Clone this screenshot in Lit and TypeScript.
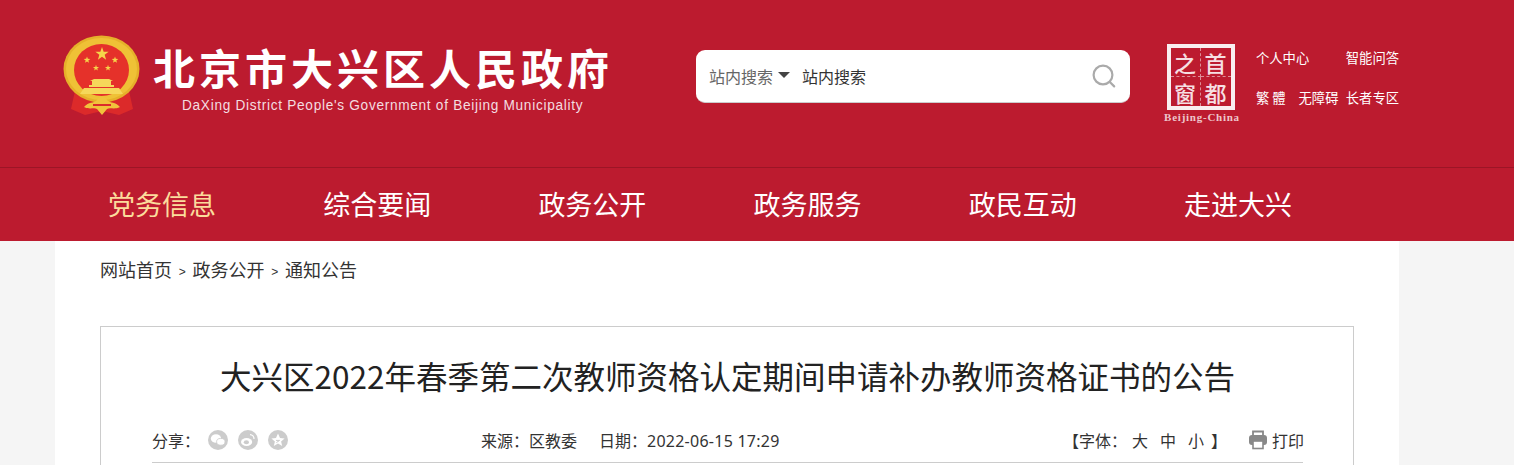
import { LitElement, html, css, svg } from "lit";
import { customElement } from "lit/decorators.js";

const star = (cx: number, cy: number, r: number) => {
  const pts: string[] = [];
  for (let i = 0; i < 10; i++) {
    const a = -Math.PI / 2 + (i * Math.PI) / 5;
    const rr = i % 2 ? r * 0.4 : r;
    pts.push(`${(cx + rr * Math.cos(a)).toFixed(2)},${(cy + rr * Math.sin(a)).toFixed(2)}`);
  }
  return svg`<polygon points=${pts.join(" ")} fill="#f5d44a"></polygon>`;
};

@customElement("app-root")
export class AppRoot extends LitElement {
  static styles = css`
    :host {
      display: block;
      height: 465px;
      overflow: hidden;
      background: #f5f5f5;
      font-family: "Noto Sans CJK SC", "Liberation Sans", sans-serif;
      color: #333;
    }
    .top {
      height: 167px;
      background: #bc1b2f;
      border-bottom: 1px solid #9c1526;
      display: flex;
      align-items: flex-start;
      box-sizing: content-box;
    }
    .emblem {
      margin: 35px 0 0 63px;
      width: 78px;
      height: 82px;
      flex: none;
    }
    .brand {
      margin: 42px 0 0 12px;
      width: 483px;
      flex: none;
      color: #fff;
    }
    .brand-cn {
      font-size: 42px;
      line-height: 50px;
      font-weight: 700;
      letter-spacing: 4px;
      white-space: nowrap;
    }
    .brand-en {
      font-family: "Liberation Sans", sans-serif;
      font-size: 15.5px;
      line-height: 18px;
      margin: 4px 0 0 29px;
      letter-spacing: 0.8px;
      color: #f4dde0;
      white-space: nowrap;
      transform: scaleX(0.88);
      transform-origin: left center;
    }
    .search {
      margin: 50px 0 0 60px;
      width: 434px;
      height: 53px;
      box-sizing: border-box;
      background: #fff;
      border-radius: 9px;
      border-bottom: 1px solid #ccc;
      display: flex;
      align-items: center;
      padding: 0 14px 0 13px;
      font-size: 16px;
      flex: none;
      white-space: nowrap;
    }
    .scope {
      color: #666;
      width: 64px;
      flex: none;
    }
    .caret {
      width: 0;
      height: 0;
      border-left: 6.5px solid transparent;
      border-right: 6.5px solid transparent;
      border-top: 6px solid #444;
      margin: 0 0 2px 5px;
      flex: none;
    }
    .query {
      margin-left: 12px;
      color: #333;
      flex: 1;
    }
    .lens {
      width: 24px;
      height: 24px;
      flex: none;
    }
    .mark {
      margin: 44px 0 0 34px;
      width: 76px;
      flex: none;
      color: #fff;
      display: flex;
      flex-direction: column;
      align-items: center;
    }
    .seal {
      width: 68px;
      height: 66px;
      box-sizing: border-box;
      border: 4px solid #f9eef0;
      display: grid;
      grid-template-columns: 1fr 1fr;
      grid-template-rows: 1fr 1fr;
      font-size: 22px;
      font-weight: 500;
      line-height: 1;
      margin-left: -3px;
    }
    .seal span {
      display: flex;
      align-items: center;
      justify-content: center;
      color: #f6dfe2;
    }
    .seal span:nth-child(odd) {
      border-right: 1px dashed #dd8e98;
    }
    .seal span:nth-child(-n + 2) {
      border-bottom: 1px dashed #dd8e98;
    }
    .mark-en {
      font-family: "Liberation Serif", serif;
      font-weight: 700;
      font-size: 11px;
      line-height: 12px;
      margin-top: 1px;
      letter-spacing: 0.75px;
      color: #eec6cb;
      white-space: nowrap;
    }
    .links {
      margin: 48px 0 0 16px;
      width: 143px;
      flex: none;
      color: #fff;
      font-size: 13.3px;
      line-height: 20px;
      display: flex;
      flex-direction: column;
      gap: 20px;
    }
    .links div {
      display: flex;
      justify-content: space-between;
      white-space: nowrap;
    }
    .links .trad {
      margin-right: 13px;
    }
    .links .a11y {
      margin-right: auto;
    }
    nav {
      height: 73px;
      background: #bc1b2f;
      display: flex;
      padding-left: 108px;
      align-items: center;
      font-size: 27px;
      color: #fff;
    }
    nav a {
      width: 215.2px;
      flex: none;
      line-height: 73px;
      margin-top: -2px;
    }
    nav a.on {
      color: #fbdc9c;
    }
    main {
      margin: 0 115px 0 55px;
      background: #fff;
      padding: 0 45px;
      height: 224px;
    }
    .crumb {
      height: 85px;
      padding-top: 15px;
      box-sizing: border-box;
      font-size: 18px;
      line-height: 26px;
      color: #333;
      display: flex;
      align-items: flex-start;
    }
    .crumb i {
      font-style: normal;
      font-family: "Liberation Sans", sans-serif;
      font-size: 12px;
      width: 20.5px;
      text-align: center;
      padding-top: 3px;
    }
    .box {
      border: 1px solid #ccc;
      border-bottom: none;
      padding: 0 50px 0 51px;
      height: 139px;
      box-sizing: border-box;
    }
    h1 {
      margin: 0;
      padding-top: 24px;
      height: 91px;
      box-sizing: border-box;
      font-size: 31.5px;
      line-height: 48px;
      font-weight: 400;
      color: #222;
      text-align: center;
      white-space: nowrap;
    }
    .meta {
      display: flex;
      border-bottom: 1px solid #ccc;
      font-size: 16px;
      line-height: 22px;
      padding-top: 11px;
      box-sizing: border-box;
      height: 45px;
      align-items: flex-start;
      white-space: nowrap;
    }
    .share {
      display: flex;
      align-items: center;
      width: 329px;
      flex: none;
    }
    .share svg {
      width: 20px;
      height: 20px;
      margin-right: 10px;
      flex: none;
    }
    .share .label {
      width: 56px;
    }
    .src {
      width: 118px;
      flex: none;
    }
    .date {
      width: 464px;
      flex: none;
    }
    .num {
      font-family: "Noto Sans", sans-serif;
      letter-spacing: 0.25px;
    }
    .tools {
      width: 185px;
      flex: none;
    }
    .tools b {
      font-weight: 400;
      margin-left: 12px;
    }
    .tools b.first {
      margin-left: 5px;
    }
    .tools b.last {
      margin-left: 7px;
    }
    .print {
      display: flex;
      align-items: center;
      gap: 4px;
      flex: none;
    }
    .print svg {
      width: 20px;
      height: 20px;
    }
  `;

  private emblem() {
    return html`<svg class="emblem" viewBox="0 0 78 82" aria-hidden="true">
      <path d="M12 56L8 74l14 6 17-4 17 4 14-6-4-18z" fill="#dc2a2a"></path>
      <ellipse cx="38.5" cy="34" rx="38" ry="33.5" fill="#e6b02a"></ellipse>
      <ellipse cx="38.5" cy="34" rx="35.5" ry="31" fill="#efc136"></ellipse>
      <ellipse cx="38.5" cy="35" rx="27.5" ry="26" fill="#e5312a"></ellipse>
      ${star(39, 19, 7)}${star(24, 25, 3.5)}${star(52, 25, 3.5)}${star(33, 33, 3.2)}${star(45, 33, 3.2)}
      <path d="M27 46l4-2h15l4 2h-2v4h3v2H26v-2h3v-4z" fill="#f6d75a"></path>
      <path d="M21 53h35l4 6H17z" fill="#f6d75a"></path>
      <path d="M21 72c5-6 9-3 13-7 1-4 9-4 10 0 4 4 8 1 13 7-6 3-10 0-13 2l-5 6-5-6c-3-2-7 1-13-2z" fill="#f1c23c"></path>
      <path d="M30 69h18v2H30z" fill="#dc2a2a"></path>
    </svg>`;
  }

  render() {
    return html`
      <header class="top">
        ${this.emblem()}
        <div class="brand">
          <div class="brand-cn">北京市大兴区人民政府</div>
          <div class="brand-en">DaXing District People's Government of Beijing Municipality</div>
        </div>
        <div class="search">
          <span class="scope">站内搜索</span>
          <span class="caret"></span>
          <span class="query">站内搜索</span>
          <svg class="lens" viewBox="0 0 24 24" fill="none" stroke="#aaa" stroke-width="2.2">
            <circle cx="11" cy="11" r="9.4"></circle>
            <path d="M17.8 18l4.4 4.4" stroke-linecap="round"></path>
          </svg>
        </div>
        <div class="mark">
          <div class="seal"><span>之</span><span>首</span><span>窗</span><span>都</span></div>
          <div class="mark-en">Beijing-China</div>
        </div>
        <div class="links">
          <div><span>个人中心</span><span>智能问答</span></div>
          <div><span class="trad">繁 體</span><span class="a11y">无障碍</span><span>长者专区</span></div>
        </div>
      </header>
      <nav>
        <a class="on">党务信息</a><a>综合要闻</a><a>政务公开</a><a>政务服务</a><a>政民互动</a><a>走进大兴</a>
      </nav>
      <main>
        <div class="crumb"><span>网站首页</span><i>&gt;</i><span>政务公开</span><i>&gt;</i><span>通知公告</span></div>
        <section class="box">
          <h1>大兴区2022年春季第二次教师资格认定期间申请补办教师资格证书的公告</h1>
          <div class="meta">
            <div class="share">
              <span class="label">分享&#xFF1A;</span>
              <svg viewBox="0 0 20 20">
                <circle cx="10" cy="10" r="10" fill="#ccc"></circle>
                <ellipse cx="8" cy="8.5" rx="5.2" ry="4.3" fill="#fff"></ellipse>
                <ellipse cx="12.8" cy="11.8" rx="4.2" ry="3.4" fill="#fff" stroke="#ccc" stroke-width=".8"></ellipse>
              </svg>
              <svg viewBox="0 0 20 20">
                <circle cx="10" cy="10" r="10" fill="#ccc"></circle>
                <ellipse cx="8.6" cy="12" rx="5.6" ry="4" fill="#fff"></ellipse>
                <ellipse cx="8.4" cy="12.3" rx="2.6" ry="2" fill="#ccc"></ellipse>
                <path d="M12 4.6a4 4 0 0 1 4 4.4" fill="none" stroke="#fff" stroke-width="1.2"></path>
              </svg>
              <svg viewBox="0 0 20 20">
                <circle cx="10" cy="10" r="10" fill="#ccc"></circle>
                <polygon points="10,3.6 12,8 16.6,8.4 13.1,11.4 14.2,16 10,13.6 5.8,16 6.9,11.4 3.4,8.4 8,8" fill="#fff"></polygon>
                <path d="M8 10.4h3.6L8.4 12.6" fill="none" stroke="#ccc" stroke-width="1"></path>
              </svg>
            </div>
            <span class="src">来源&#xFF1A;区教委</span>
            <span class="date">日期&#xFF1A;<span class="num">2022-06-15 17:29</span></span>
            <span class="tools">【字体&#xFF1A;<b class="first">大</b><b>中</b><b>小</b><b class="last">】</b></span>
            <span class="print">
              <svg viewBox="0 0 20 20">
                <path d="M5 5V1.5h10V5" fill="none" stroke="#888" stroke-width="1.8"></path>
                <rect x="1" y="5" width="18" height="10" rx="3" fill="#888"></rect>
                <rect x="5" y="11" width="10" height="7.5" fill="#fff" stroke="#888" stroke-width="1.6"></rect>
              </svg>
              打印
            </span>
          </div>
        </section>
      </main>
    `;
  }
}
